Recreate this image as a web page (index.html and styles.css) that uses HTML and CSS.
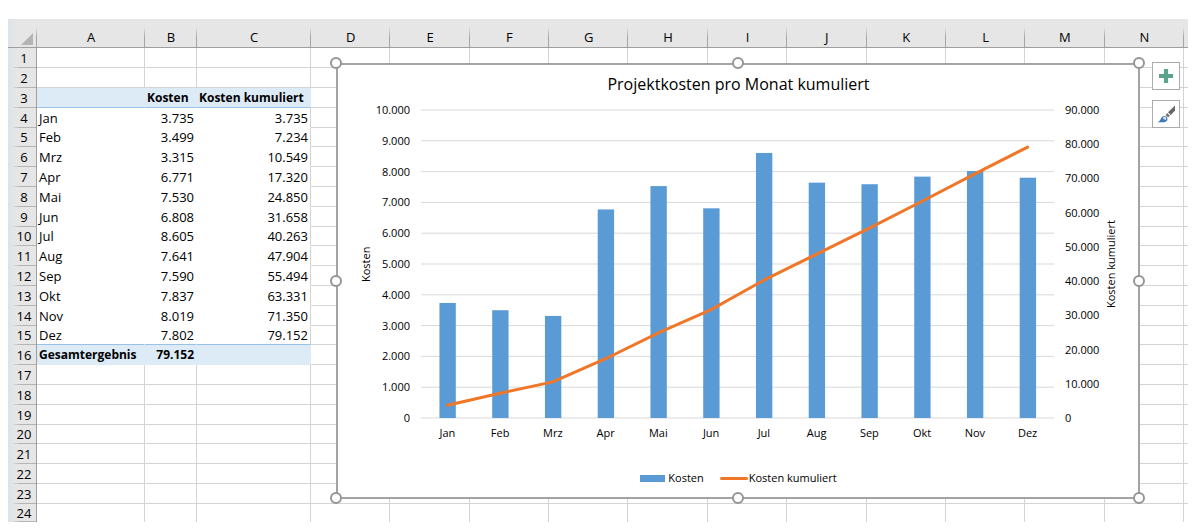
FILE: index.html
```html
<!DOCTYPE html>
<html lang="de">
<head>
<meta charset="utf-8">
<title>Projektkosten pro Monat kumuliert</title>
<link rel="stylesheet" href="styles.css">
</head>
<body>
<main class="sheet">
  <table class="grid">
    <colgroup>
      <col class="col-head"><col class="col-a"><col class="col-b"><col class="col-c">
      <col span="11"><col class="col-rest">
    </colgroup>
    <thead id="head"></thead>
    <tbody id="rows"></tbody>
  </table>

  <figure class="chart">
    <figcaption class="chart-title">Projektkosten pro Monat kumuliert</figcaption>
    <div class="axis-title axis-title-left">Kosten</div>
    <div class="axis axis-left">
      <span>10.000</span><span>9.000</span><span>8.000</span><span>7.000</span><span>6.000</span><span>5.000</span><span>4.000</span><span>3.000</span><span>2.000</span><span>1.000</span><span>0</span>
    </div>
    <svg class="plot" id="plot" viewBox="0 0 1200 1000" preserveAspectRatio="none" aria-hidden="true"></svg>
    <div class="axis axis-right">
      <span>90.000</span><span>80.000</span><span>70.000</span><span>60.000</span><span>50.000</span><span>40.000</span><span>30.000</span><span>20.000</span><span>10.000</span><span>0</span>
    </div>
    <div class="axis-title axis-title-right">Kosten kumuliert</div>
    <div class="months" id="months"></div>
    <div class="legend">
      <span class="legend-item"><i class="key-bar"></i>Kosten</span>
      <span class="legend-item legend-item-line"><i class="key-line"></i>Kosten kumuliert</span>
    </div>
    <i class="handle top left"></i><i class="handle top center"></i><i class="handle top right"></i>
    <i class="handle middle left"></i><i class="handle middle right"></i>
    <i class="handle bottom left"></i><i class="handle bottom center"></i><i class="handle bottom right"></i>
  </figure>

  <div class="chart-tools">
    <button type="button" aria-label="Diagrammelemente">
      <svg viewBox="0 0 26 26" width="26" height="26"><path d="M10.900 6h4.200v4.900H20v4.200h-4.900V20h-4.200v-4.900H6v-4.200h4.900z" fill="#5aa58a"/></svg>
    </button>
    <button type="button" aria-label="Diagrammformatvorlagen">
      <svg viewBox="0 0 26 26" width="26" height="26">
        <path d="M22 4.500v5l-4.200 4.600-2.800-2.900z" fill="#666"/>
        <path d="M14.200 12l2.800 2.800-2 1.800-2.500-2.600z" fill="#777"/>
        <path d="M4.500 21.200c2.300-.8 2.700-2.300 3.600-4 1.200-2.300 4.200-2.900 5.700-1 1.600 2.200.2 4.600-2.800 5z" fill="#3f78b8"/>
        <path d="M9.600 17c.7-1.300 2.500-1.600 3.300-.4.600 1 .2 2-.7 2.600-.7-.9-1.500-1.600-2.600-2.200z" fill="#dcebf8"/>
      </svg>
    </button>
  </div>
</main>
<script src="script.js"></script>
</body>
</html>
```
FILE: styles.css
```css
* { box-sizing: border-box; }

body {
  margin: 0;
  padding: 19px 12px 11px 8px;
  background: #fff;
  color: #000;
  font-family: "Open Sans", "Noto Sans", sans-serif;
}

.sheet { position: relative; }

.grid {
  width: 100%;
  table-layout: fixed;
  border-collapse: separate;
  border-spacing: 0;
  font-size: 13px;
  line-height: 18px;
}
.col-head { width: 29px; }
.col-a { width: 108px; }
.col-b { width: 52px; }
.col-c { width: 114px; }
.col-rest { width: 4px; }

.grid th, .grid td {
  padding: 0 2px;
  white-space: nowrap;
  overflow: hidden;
}
.grid thead th {
  height: 29px;
  padding-top: 8px;
  background: linear-gradient(to bottom, #e6e6e6 8px, #a6a6a6 18px) right / 1px 100% no-repeat, #e6e6e6;
  border-bottom: 1px solid #9f9f9f;
  font-weight: 400;
}
.grid thead th:first-child {
  background: linear-gradient(to bottom, #e6e6e6 8px, #a6a6a6 18px) right / 1px 100% no-repeat,
    linear-gradient(to right, #dbe3ec, #e6e6e6 7px);
}
.grid thead th:last-child { background: #e6e6e6; }
.corner { display: block; margin: 3px 0 0 10px; }

.grid tbody tr { height: 20px; }
.grid tbody tr:nth-child(5n) { height: 19px; line-height: 17px; }
.grid tbody tr:last-child { height: 18px; line-height: 17px; }
.grid tbody th {
  padding: 0 0 0 4px;
  font-weight: 400;
  text-align: center;
  border-right: 1px solid #9f9f9f;
  background: linear-gradient(to right, transparent 4px, #b4b4b4 12px) bottom / 100% 1px no-repeat,
    linear-gradient(to right, #dbe3ec, #e6e6e6 7px);
}
.grid td {
  border-right: 1px solid #d4d4d4;
  border-bottom: 1px solid #d4d4d4;
}
.grid td:last-child { border-right: 0; }
.grid tr:last-child td { border-bottom: 0; }
.grid td.num { text-align: right; }
.grid td.data { border-color: transparent; }
.grid td.data.c { border-right-color: #d4d4d4; }
.grid td.band {
  background: #ddebf7;
  border-color: #ddebf7;
  font-weight: 700;
  font-size: 12px;
}
.grid td.rule { border-bottom-color: #9bc2e6; }

.chart {
  position: absolute;
  top: 44px;
  left: 328px;
  right: 48px;
  margin: 0;
  padding: 0 19px 9px 20px;
  border: 2px solid #a3a3a3;
  background: #fff;
  display: grid;
  grid-template-columns: 16px 36px 1fr 38px 16px;
  grid-template-rows: 45px 308px 25px 45px;
  font-size: 11px;
  line-height: 20px;
}
.chart-title {
  grid-column: 1 / -1;
  font-size: 16px;
  line-height: 38px;
  text-align: center;
}
.axis {
  display: flex;
  flex-direction: column;
  justify-content: space-between;
  margin: -10px 0;
}
.axis-left { text-align: right; }
.plot {
  display: block;
  width: calc(100% - 22px);
  height: 308px;
  margin: 0 11px;
  overflow: visible;
}
.gridline { stroke: #d9d9d9; stroke-width: 1px; vector-effect: non-scaling-stroke; }
.bar { fill: #5b9bd5; }
.total { fill: none; stroke: #f07628; stroke-width: 3px; stroke-linecap: round; stroke-linejoin: round; vector-effect: non-scaling-stroke; }
.axis-title {
  writing-mode: vertical-rl;
  transform: rotate(180deg);
  text-align: center;
  line-height: 16px;
}
.months {
  grid-column: 3;
  margin: 5px 11px 0;
  display: grid;
  grid-template-columns: repeat(12, 1fr);
  text-align: center;
}
.legend {
  grid-column: 1 / -1;
  display: flex;
  justify-content: center;
  align-items: flex-end;
  gap: 16px;
}
.legend-item { display: flex; align-items: center; gap: 3px; }
.legend-item-line { gap: 1px; }
.key-bar { width: 25px; height: 7px; background: #5b9bd5; }
.key-line { width: 28px; height: 3px; border-radius: 2px; background: #f07628; }

.handle {
  position: absolute;
  width: 12px;
  height: 12px;
  border: 2px solid #959595;
  border-radius: 50%;
  background: #fff;
}
.handle.top { top: -8px; }
.handle.middle { top: calc(50% - 6px); }
.handle.bottom { bottom: -7px; }
.handle.left { left: -8px; }
.handle.center { left: calc(50% - 6px); }
.handle.right { right: -7px; }

.chart-tools {
  position: absolute;
  top: 43px;
  right: 8px;
  display: flex;
  flex-direction: column;
  gap: 10px;
}
.chart-tools button {
  width: 28px;
  height: 28px;
  padding: 0;
  border: 1px solid #ababab;
  background: #fff;
}
.chart-tools svg { display: block; }
```
FILE: script.js
```js
const months = ["Jan", "Feb", "Mrz", "Apr", "Mai", "Jun", "Jul", "Aug", "Sep", "Okt", "Nov", "Dez"];
const costs = [3735, 3499, 3315, 6771, 7530, 6808, 8605, 7641, 7590, 7837, 8019, 7802];
const format = n => String(n).replace(/(\d)(?=(\d{3})+$)/g, "$1.");
let sum = 0;
const totals = costs.map(c => (sum += c));

// Worksheet
const corner = '<svg class="corner" width="14" height="14"><path d="M13 1v12H1z" fill="#b4b4b4"/></svg>';
document.getElementById("head").innerHTML =
  `<tr><th>${corner}</th>${[..."ABCDEFGHIJKLMN"].map(c => `<th scope="col">${c}</th>`).join("")}<th></th></tr>`;

const cell = (cls = "", text = "") => `<td class="${cls}">${text}</td>`;
let rows = "";
for (let r = 1; r <= 24; r++) {
  const i = r - 4;
  let cells;
  if (r === 3) {
    cells = cell("band rule") + cell("band rule", "Kosten") + cell("band rule", "Kosten kumuliert");
  } else if (i >= 0 && i < 12) {
    const rule = i === 11 ? " rule" : "";
    cells = cell("data" + rule, months[i]) + cell("data num" + rule, format(costs[i])) + cell("data c num" + rule, format(totals[i]));
  } else if (r === 16) {
    cells = cell("band", "Gesamtergebnis") + cell("band num", format(sum)) + cell("band");
  } else {
    cells = cell().repeat(3);
  }
  rows += `<tr><th scope="row">${r}</th>${cells}${cell().repeat(12)}</tr>`;
}
document.getElementById("rows").innerHTML = rows;

// Chart
let shapes = "";
for (let y = 0; y <= 1000; y += 100) {
  shapes += `<line class="gridline" x1="0" x2="1200" y1="${y}" y2="${y}"/>`;
}
costs.forEach((c, i) => {
  shapes += `<rect class="bar" x="${i * 100 + 35}" width="31" y="${1000 - c / 10}" height="${c / 10}"/>`;
});
shapes += `<polyline class="total" points="${totals.map((t, i) => `${i * 100 + 50},${1000 - t / 90}`).join(" ")}"/>`;
document.getElementById("plot").innerHTML = shapes;
document.getElementById("months").innerHTML = months.map(m => `<span>${m}</span>`).join("");
```
